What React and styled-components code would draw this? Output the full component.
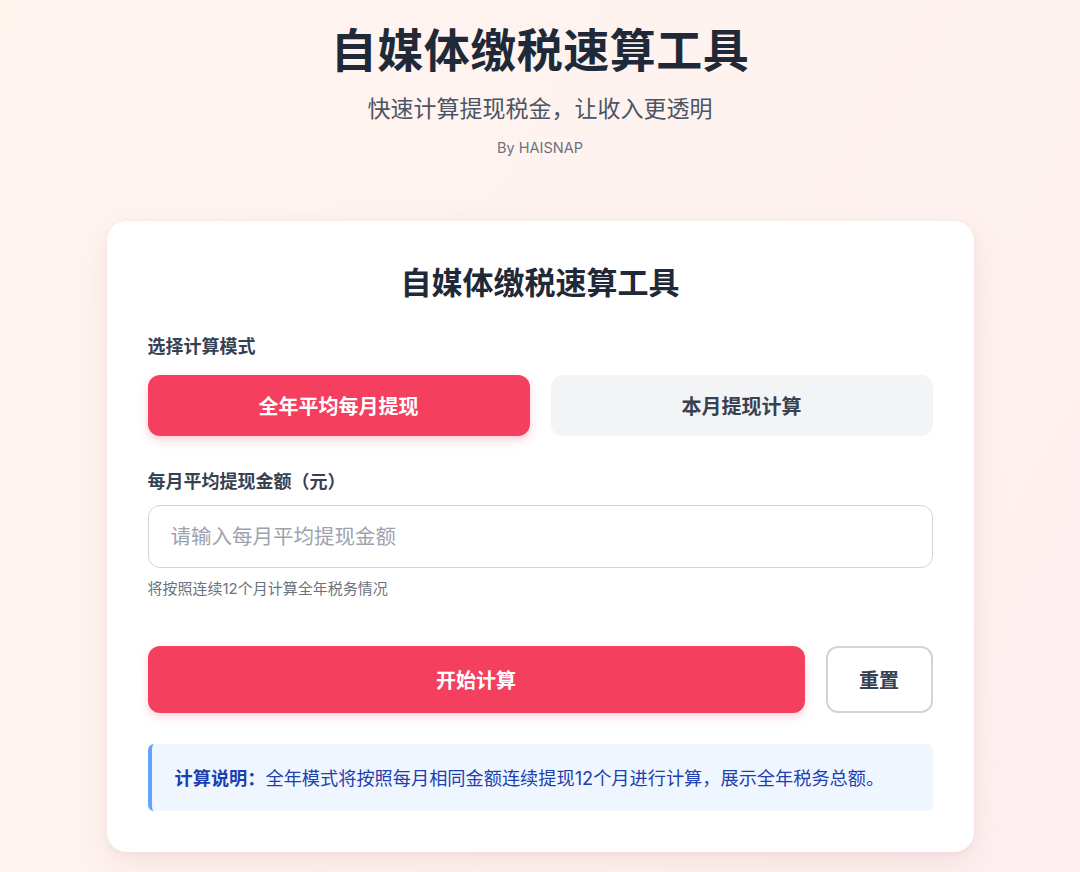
import React, { useState } from "react";
import styled, { createGlobalStyle, css } from "styled-components";

const GlobalStyle = createGlobalStyle`
  html, body {
    margin: 0;
    padding: 0;
  }
  body {
    font-family: "Inter", "Noto Sans CJK SC", sans-serif;
    background: linear-gradient(120deg, #fff5ef 0%, #fef2ef 55%, #fdeff0 100%);
    min-height: 100vh;
    color: #1f2937;
  }
  * {
    box-sizing: border-box;
  }
`;

const Page = styled.div`
  width: 867px;
  margin: 0 auto;
  padding-top: 22px;
  padding-bottom: 40px;
`;

const Header = styled.header`
  display: flex;
  flex-direction: column;
  align-items: center;
  margin-bottom: 63px;
`;

const MainTitle = styled.h1`
  margin: 0;
  font-size: 46px;
  line-height: 56px;
  font-weight: 700;
  color: #1f2937;
  letter-spacing: 0.5px;
`;

const SubTitle = styled.p`
  margin: 15px 0 0;
  font-size: 23px;
  line-height: 32px;
  color: #4b5563;
`;

const ByLine = styled.p`
  margin: 13px 0 0;
  font-size: 14.5px;
  line-height: 20px;
  color: #6b7280;
`;

const Card = styled.section`
  background: #ffffff;
  border-radius: 20px;
  padding: 41px 41px 41px;
  box-shadow: 0 10px 30px rgba(190, 120, 110, 0.14), 0 2px 6px rgba(0, 0, 0, 0.04);
`;

const CardTitle = styled.h2`
  margin: 0;
  text-align: center;
  font-size: 31px;
  line-height: 42px;
  font-weight: 700;
  color: #1f2937;
`;

const Label = styled.div`
  font-size: 18px;
  line-height: 27px;
  font-weight: 600;
  color: #374151;
  margin-top: ${(p) => p.top || 0}px;
  margin-bottom: ${(p) => p.bottom || 0}px;
`;

const ModeRow = styled.div`
  display: grid;
  grid-template-columns: 1fr 1fr;
  gap: 21px;
`;

const ModeButton = styled.button`
  height: 61px;
  border: none;
  border-radius: 12px;
  font-family: inherit;
  font-size: 20px;
  font-weight: 700;
  cursor: pointer;
  background: #f3f4f6;
  color: #374151;
  ${(p) =>
    p.active &&
    css`
      background: #f43f5e;
      color: #ffffff;
      box-shadow: 0 4px 10px rgba(244, 63, 94, 0.25);
    `}
`;

const Input = styled.input`
  display: block;
  width: 100%;
  height: 63px;
  border: 1.5px solid #d1d5db;
  border-radius: 12px;
  padding: 0 22px;
  font-family: inherit;
  font-size: 20.5px;
  color: #1f2937;
  outline: none;
  &::placeholder {
    color: #9ca3af;
  }
`;

const Hint = styled.p`
  margin: 10px 0 0;
  font-size: 15px;
  line-height: 22px;
  color: #6b7280;
`;

const ActionRow = styled.div`
  display: flex;
  gap: 21px;
  margin-top: 46px;
`;

const PrimaryButton = styled.button`
  flex: 1;
  height: 67px;
  border: none;
  border-radius: 12px;
  background: #f43f5e;
  color: #ffffff;
  font-family: inherit;
  font-size: 20px;
  font-weight: 700;
  cursor: pointer;
  box-shadow: 0 4px 10px rgba(244, 63, 94, 0.22);
`;

const GhostButton = styled.button`
  width: 107px;
  height: 67px;
  border: 2px solid #d1d5db;
  border-radius: 12px;
  background: #ffffff;
  color: #374151;
  font-family: inherit;
  font-size: 20px;
  font-weight: 700;
  cursor: pointer;
`;

const InfoBox = styled.div`
  margin-top: 31px;
  min-height: 67px;
  display: flex;
  align-items: center;
  background: #eff6ff;
  border-left: 4px solid #60a5fa;
  border-radius: 6px;
  padding: 0 20px 0 23px;
  font-size: 18.2px;
  line-height: 26px;
  color: #1e40af;
`;

const InfoStrong = styled.strong`
  font-weight: 700;
`;

const App = () => {
  const [mode, setMode] = useState("year");
  const [amount, setAmount] = useState("");

  return (
    <>
      <GlobalStyle />
      <Page>
        <Header>
          <MainTitle>自媒体缴税速算工具</MainTitle>
          <SubTitle>快速计算提现税金，让收入更透明</SubTitle>
          <ByLine>By HAISNAP</ByLine>
        </Header>
        <Card>
          <CardTitle>自媒体缴税速算工具</CardTitle>
          <Label top={29} bottom={15}>
            选择计算模式
          </Label>
          <ModeRow>
            <ModeButton active={mode === "year"} onClick={() => setMode("year")}>
              全年平均每月提现
            </ModeButton>
            <ModeButton active={mode === "month"} onClick={() => setMode("month")}>
              本月提现计算
            </ModeButton>
          </ModeRow>
          <Label top={32} bottom={10}>
            每月平均提现金额（元）
          </Label>
          <Input
            value={amount}
            onChange={(e) => setAmount(e.target.value)}
            placeholder="请输入每月平均提现金额"
          />
          <Hint>将按照连续12个月计算全年税务情况</Hint>
          <ActionRow>
            <PrimaryButton>开始计算</PrimaryButton>
            <GhostButton onClick={() => setAmount("")}>重置</GhostButton>
          </ActionRow>
          <InfoBox>
            <span>
              <InfoStrong>计算说明：</InfoStrong>
              全年模式将按照每月相同金额连续提现12个月进行计算，展示全年税务总额。
            </span>
          </InfoBox>
        </Card>
      </Page>
    </>
  );
};

export default App;
